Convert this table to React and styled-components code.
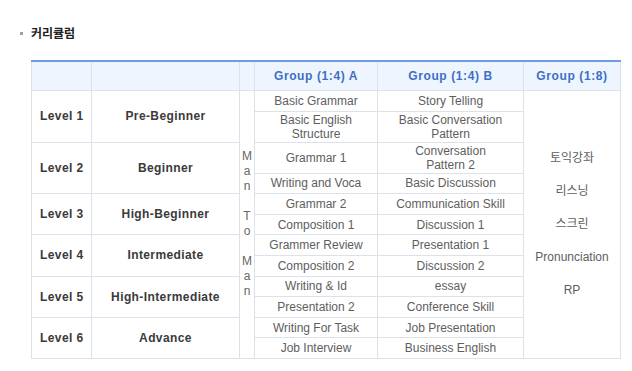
import React from "react";
import styled, { createGlobalStyle } from "styled-components";

const GlobalStyle = createGlobalStyle`
  body {
    margin: 0;
    background: #fff;
    font-family: "Liberation Sans", "Noto Sans CJK KR", sans-serif;
    font-size: 12px;
  }
`;

const Page = styled.div`
  padding: 25px 12px 0 20px;
`;

const Title = styled.h3`
  display: flex;
  align-items: center;
  gap: 8px;
  margin: 0 0 19px 0;
  font-size: 12px;
  font-weight: bold;
  color: #222;
  font-family: "Noto Sans CJK KR", sans-serif;
  line-height: 16px;
`;

const Bullet = styled.span`
  width: 3px;
  height: 3px;
  background: #a0a0a0;
`;

const Table = styled.table`
  margin-left: 11px;
  width: 590px;
  border-collapse: collapse;
  table-layout: fixed;
  border-top: 2px solid #6e9be2;
  border-bottom: 1px solid #d5dbe5;
  border-left: 1px solid #d5dbe5;
  border-right: 1px solid #d5dbe5;
`;

const Th = styled.th`
  height: 28px;
  padding: 0;
  background: #eef5ff;
  border: 1px solid #dce2ea;
  border-top: none;
  color: #3d6fc4;
  font-weight: bold;
  font-size: 12px;
  letter-spacing: 0.6px;
  text-align: center;
`;

const Td = styled.td`
  padding: 1px 3px;
  border: 1px solid #dce2ea;
  color: ${(p) => (p.$strong ? "#3a3a3a" : "#5e5e5e")};
  font-weight: ${(p) => (p.$strong ? "bold" : "normal")};
  letter-spacing: ${(p) => (p.$strong ? "0.4px" : "0")};
  text-align: ${(p) => (p.$left ? "left" : "center")};
  padding-left: ${(p) => (p.$left ? "8px" : "3px")};
  line-height: 14px;
  vertical-align: middle;
  white-space: nowrap;
`;

const Row = styled.tr`
  height: ${(p) => (p.$tall ? "31px" : "20.6px")};
`;

const Vertical = styled.div`
  line-height: 15px;
  color: #666;
  text-align: center;
`;

const Extras = styled.div`
  display: flex;
  flex-direction: column;
  align-items: center;
  gap: 17px;
  color: #5e5e5e;
  font-family: "Liberation Sans", "Noto Sans CJK KR", sans-serif;
  line-height: 16px;
`;

const levels = [
  { lv: "Level 1", name: "Pre-Beginner", rows: [["Basic Grammar", "Story Telling"], [["Basic English", "Structure"], ["Basic Conversation", "Pattern"]]] },
  { lv: "Level 2", name: "Beginner", rows: [["Grammar 1", ["Conversation", "Pattern 2"]], ["Writing and Voca", "Basic Discussion"]] },
  { lv: "Level 3", name: "High-Beginner", rows: [["Grammar 2", "Communication Skill"], ["Composition 1", "Discussion 1"]] },
  { lv: "Level 4", name: "Intermediate", rows: [["Grammer Review", "Presentation 1"], ["Composition 2", "Discussion 2"]] },
  { lv: "Level 5", name: "High-Intermediate", rows: [["Writing & Id", "essay"], ["Presentation 2", "Conference Skill"]] },
  { lv: "Level 6", name: "Advance", rows: [["Writing For Task", "Job Presentation"], ["Job Interview", "Business English"]] },
];

const extras = ["토익강좌", "리스닝", "스크린", "Pronunciation", "RP"];
const manToMan = ["M", "a", "n", "", "T", "o", "", "M", "a", "n"];

const Cell = ({ value }) =>
  Array.isArray(value) ? (
    <>
      {value[0]}
      <br />
      {value[1]}
    </>
  ) : (
    value
  );

export default function App() {
  return (
    <Page>
      <GlobalStyle />
      <Title>
        <Bullet />
        커리큘럼
      </Title>
      <Table>
        <colgroup>
          <col style={{ width: 60 }} />
          <col style={{ width: 148 }} />
          <col style={{ width: 15 }} />
          <col style={{ width: 123 }} />
          <col style={{ width: 146 }} />
          <col style={{ width: 97 }} />
        </colgroup>
        <thead>
          <tr>
            <Th />
            <Th />
            <Th />
            <Th>Group (1:4) A</Th>
            <Th>Group (1:4) B</Th>
            <Th>Group (1:8)</Th>
          </tr>
        </thead>
        <tbody>
          {levels.map((l, i) =>
            l.rows.map((r, j) => (
              <Row key={l.lv + j} $tall={Array.isArray(r[0]) || Array.isArray(r[1])}>
                {j === 0 && (
                  <>
                    <Td rowSpan={2} $strong $left>
                      {l.lv}
                    </Td>
                    <Td rowSpan={2} $strong>
                      {l.name}
                    </Td>
                  </>
                )}
                {i === 0 && j === 0 && (
                  <Td rowSpan={12} style={{ padding: 0 }}>
                    <Vertical>
                      {manToMan.map((c, k) => (
                        <div key={k}>{c || "\u00a0"}</div>
                      ))}
                    </Vertical>
                  </Td>
                )}
                <Td>
                  <Cell value={r[0]} />
                </Td>
                <Td>
                  <Cell value={r[1]} />
                </Td>
                {i === 0 && j === 0 && (
                  <Td rowSpan={12}>
                    <Extras>
                      {extras.map((e) => (
                        <span key={e}>{e}</span>
                      ))}
                    </Extras>
                  </Td>
                )}
              </Row>
            ))
          )}
        </tbody>
      </Table>
    </Page>
  );
}
